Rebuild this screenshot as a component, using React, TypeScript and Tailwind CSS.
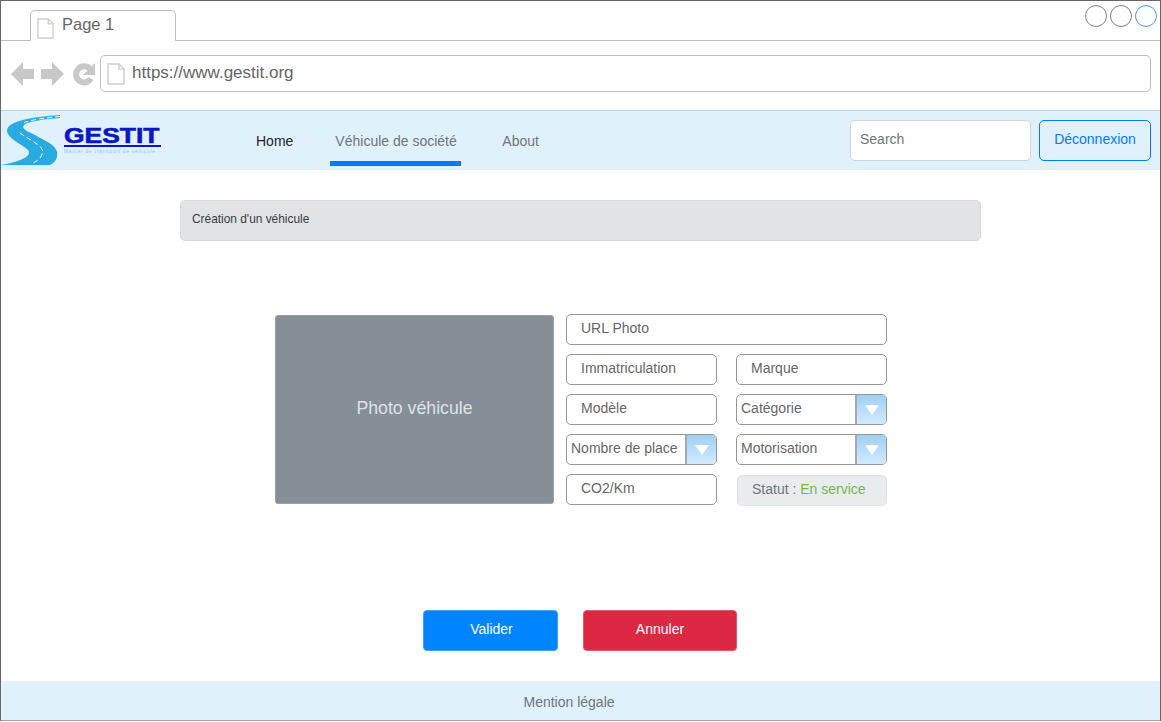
function Doc({ className }: { className: string }) {
  return (
    <svg className={className} viewBox="0 0 18 22" fill="#fff" stroke="#d0d0d0" strokeWidth="1.5">
      <path d="M1 1h11l5 5v15H1z" />
      <path d="M12 1v5h5" fill="none" />
    </svg>
  );
}

function Field({ label, w }: { label: string; w: string }) {
  return (
    <div className={`${w} h-[31px] pl-[14px] pt-[3px] bg-white border border-[#969696] rounded-[5px] text-[14px] text-[#666666] leading-[20px] shrink-0`}>
      {label}
    </div>
  );
}

function Select({ label }: { label: string }) {
  return (
    <div className="w-[151px] h-[31px] flex bg-white border border-[#969696] rounded-[5px] text-[14px] text-[#666666] leading-[20px] overflow-hidden shrink-0">
      <div className="flex-1 pl-[4px] pt-[3px] whitespace-nowrap">{label}</div>
      <div className="w-[31px] border-l-2 border-[#a8a8a8] bg-gradient-to-b from-[#9fd0f5] to-[#d2eaff] flex items-center justify-center">
        <svg width="14" height="10" viewBox="0 0 14 10"><path d="M0 0h14L7 10z" fill="#fff" /></svg>
      </div>
    </div>
  );
}

export default function App() {
  return (
    <div className="w-[1161px] h-[721px] flex flex-col bg-white border-t border-x border-[#666666] font-['Liberation_Sans',Arial,sans-serif] overflow-hidden">
      {/* tab strip */}
      <div className="h-[40px] flex justify-between border-b border-[#c0c0c0] shrink-0">
        <div className="ml-[29px] mt-[9px] w-[146px] h-[31px] bg-white border border-b-0 border-[#c0c0c0] rounded-t-[5px] flex items-start pl-[6px] pt-[3px] -mb-px">
          <Doc className="w-[17px] h-[21px] mt-[4px]" />
          <span className="ml-[8px] text-[16.5px] leading-[20px] text-[#666666]">Page 1</span>
        </div>
        <div className="flex gap-[3px] mt-[4px] mr-[3px] h-[22px]">
          <div className="w-[22px] h-[22px] rounded-full border border-[#808080]" />
          <div className="w-[22px] h-[22px] rounded-full border border-[#808080]" />
          <div className="w-[22px] h-[22px] rounded-full border border-[#3d9df2]" />
        </div>
      </div>

      {/* address row */}
      <div className="h-[69px] flex items-start shrink-0 pl-[10px]">
        <div className="flex items-center gap-[6px] mt-[21px]">
          <svg width="24" height="24" viewBox="0 0 24 24" fill="#c8c8c8"><path d="M0 12 12 0v7h11v10H12v7z" /></svg>
          <svg width="24" height="24" viewBox="0 0 24 24" fill="#c8c8c8"><path d="M23 12 11 0v7H0v10h11v7z" /></svg>
          <svg className="ml-[2px]" width="23" height="24" viewBox="0 0 23 24" fill="none">
            <path d="M18 16.5a8 8 0 1 1-1.2-9.8" stroke="#c8c8c8" strokeWidth="6" />
            <path d="M22 1v12H10z" fill="#c8c8c8" />
          </svg>
        </div>
        <div className="ml-[4px] mt-[14px] w-[1051px] h-[37px] border border-[#c0c0c0] rounded-[5px] flex items-center pl-[6px]">
          <Doc className="w-[18px] h-[22px] mt-[1px]" />
          <span className="ml-[7px] text-[17px] leading-[20px] text-[#666666] -mt-[2px]">https://www.gestit.org</span>
        </div>
      </div>

      {/* nav */}
      <div className="h-[60px] flex items-start bg-[#e1f1fc] border-t border-[#c8d0d6] shrink-0 text-[14px]">
        <svg className="shrink-0 -mt-px -ml-px" width="60" height="60" viewBox="0 0 60 60">
          <path d="M60 5C45 6 25 8 14 13 7 16 6 20 8 24 12 31 22 34 28 40 32 45 24 51 1 55H50C56 52 58 47 57 42 55 34 45 31 35 25 27 21 21 19 24 15 30 11 45 9 60 8Z" fill="#29abe2" />
          <path d="M60 6.5C48 7.5 35 9 24 12.5M20 23C28 29 38 33 42 39 44 44 40 50 33 53" fill="none" stroke="#fff" strokeWidth="1" strokeDasharray="5 3" />
        </svg>
        <div className="w-[97px] mt-[16px] ml-[4px] shrink-0">
          <div className="h-[17px] text-[22px] leading-[17px] font-bold text-[#0a18c4] [-webkit-text-stroke:0.6px_#0a18c4] scale-x-[1.2] origin-left whitespace-nowrap">GESTIT</div>
          <div className="h-[2px] mt-px bg-[#0a18c4]" />
          <div className="text-[5px] leading-[6px] mt-px tracking-[0.7px] text-[#8cc8ee] whitespace-nowrap">Master de transport de véhicule</div>
        </div>
        <div className="ml-[95px] pt-[20px] leading-[20px] text-[#212529]">Home</div>
        <div className="ml-[37px] w-[131px] h-[55px] pt-[20px] pl-[5px] leading-[20px] text-[#6c757d] border-b-[5px] border-[#007bff] whitespace-nowrap">Véhicule de société</div>
        <div className="ml-[41px] pt-[20px] leading-[20px] text-[#6c757d]">About</div>
        <div className="ml-auto mt-[9px] flex gap-[8px] mr-[9px]">
          <div className="w-[181px] h-[41px] bg-white border border-[#ced4da] rounded-[5px] pl-[9px] pt-[8px] leading-[20px] text-[#6c757d]">Search</div>
          <div className="w-[112px] h-[41px] border border-[#007bff] rounded-[5px] flex justify-center pt-[8px] leading-[20px] text-[#007bff]">Déconnexion</div>
        </div>
      </div>

      {/* content */}
      <div className="flex-1 flex flex-col">
        <div className="ml-[179px] mt-[30px] w-[801px] h-[41px] bg-[#e2e3e5] border border-[#d6d8db] rounded-[5px] pl-[11px] pt-[10px] text-[11.9px] leading-[16px] text-[#383d41]">
          Création d'un véhicule
        </div>

        <div className="ml-[274px] mt-[74px] flex items-start gap-[12px]">
          <div className="w-[279px] h-[189px] bg-[#868e96] rounded-[3px] border border-[#9aa1a8] flex items-center justify-center pb-[3px] text-[17.7px] text-[#dee2e6]">
            Photo véhicule
          </div>
          <div className="w-[321px] flex flex-col gap-[9px] -mt-px">
            <Field label="URL Photo" w="w-[321px]" />
            <div className="flex gap-[19px]">
              <Field label="Immatriculation" w="w-[151px]" />
              <Field label="Marque" w="w-[151px]" />
            </div>
            <div className="flex gap-[19px]">
              <Field label="Modèle" w="w-[151px]" />
              <Select label="Catégorie" />
            </div>
            <div className="flex gap-[19px]">
              <Select label="Nombre de place" />
              <Select label="Motorisation" />
            </div>
            <div className="flex gap-[19px]">
              <Field label="CO2/Km" w="w-[151px]" />
              <div className="ml-px mt-px w-[150px] h-[31px] bg-[#e9ecef] border border-[#dde1e5] rounded-[5px] pl-[14px] pt-[3px] text-[14px] leading-[20px] text-[#6c757d] whitespace-nowrap">
                Statut : <span className="text-[#71b84c]">En service</span>
              </div>
            </div>
          </div>
        </div>

        <div className="ml-[422px] mt-[104px] flex gap-[25px]">
          <div className="w-[135px] h-[41px] pl-[2px] bg-[#0084ff] border border-[#3f9fff] rounded-[4px] flex justify-center pt-[8px] text-[14px] leading-[20px] text-white">Valider</div>
          <div className="w-[154px] h-[41px] bg-[#dc2843] border border-[#e4566b] rounded-[4px] flex justify-center pt-[8px] text-[14px] leading-[20px] text-white">Annuler</div>
        </div>
      </div>

      {/* footer */}
      <div className="h-[40px] bg-[#e1f1fc] border-b border-[#a8a8a8] flex justify-center pt-[11px] text-[14px] leading-[20px] text-[#6c757d] pr-[23px] shrink-0">
        Mention légale
      </div>
    </div>
  );
}
